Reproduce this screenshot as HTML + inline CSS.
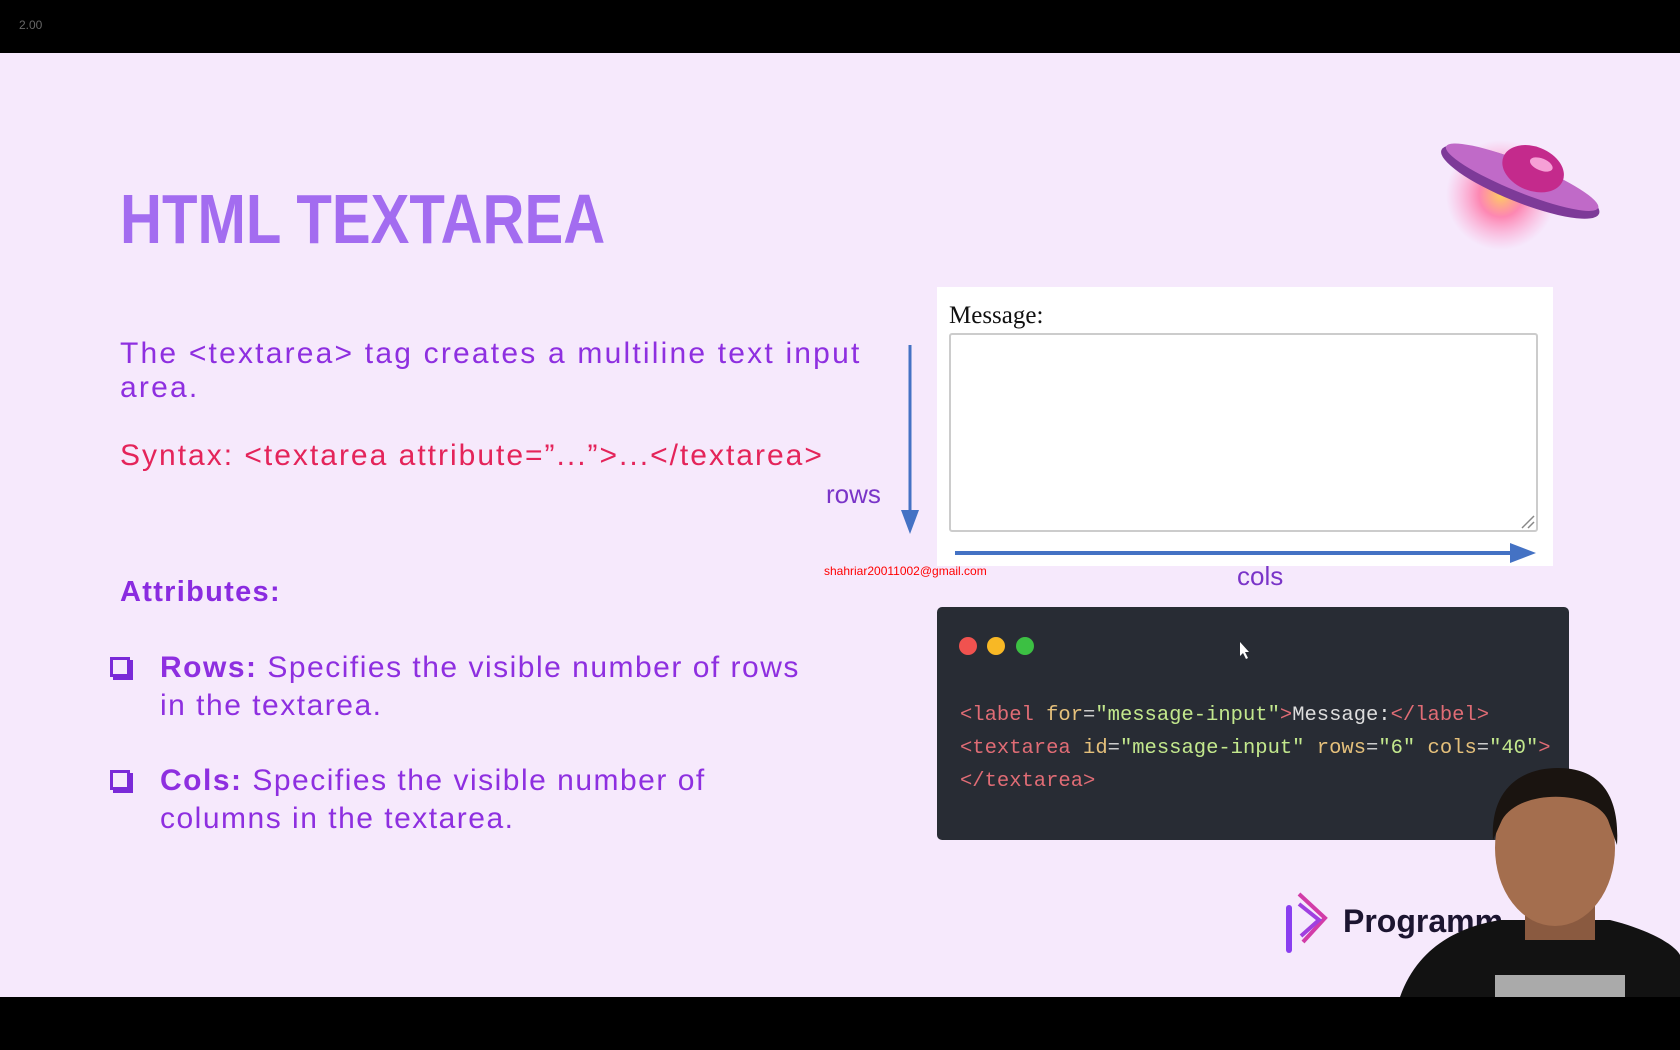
<!DOCTYPE html>
<html><head><meta charset="utf-8">
<style>
*{margin:0;padding:0;box-sizing:border-box}
body{width:1680px;height:1050px;overflow:hidden;background:#f6e9fc;font-family:"Liberation Sans",sans-serif;position:relative}
.a{position:absolute;white-space:nowrap}
.top{left:0;top:0;width:1680px;height:53px;background:#000}
.bot{left:0;top:997px;width:1680px;height:53px;background:#000}
.t{font-size:30px;color:#8e2fe0;line-height:34px}
.mono{font-family:"Liberation Mono",monospace;font-size:20.5px;line-height:33px;color:#e06c75}
.cb{width:20px;height:20px;border:3px solid #7a2ad8;box-shadow:3px 3px 0 #7a2ad8}
</style></head><body>
<div class="a top"></div>
<div class="a" style="left:19px;top:18px;font-size:12px;color:#666">2.00</div>

<div class="a" style="left:120px;top:182px;font-size:70px;font-weight:bold;color:#a36cf0;transform:scaleX(0.83);transform-origin:left top;line-height:74px">HTML TEXTAREA</div>

<div class="a t" style="left:120px;top:337px;letter-spacing:2.2px">The &lt;textarea&gt; tag creates a multiline text input</div>
<div class="a t" style="left:120px;top:371px;letter-spacing:2.2px">area.</div>
<div class="a t" style="left:120px;top:439px;color:#e4245a;letter-spacing:2px">Syntax: &lt;textarea attribute=”...”&gt;...&lt;/textarea&gt;</div>
<div class="a" style="left:826px;top:479px;font-size:26px;color:#7a34c8">rows</div>

<svg class="a" style="left:0;top:0" width="1680" height="1050">
<line x1="910" y1="345" x2="910" y2="512" stroke="#4472c4" stroke-width="3"/>
<polygon points="901,510 919,510 910,534" fill="#4472c4"/>
</svg>

<div class="a" style="left:937px;top:287px;width:616px;height:279px;background:#fff"></div>
<div class="a" style="left:949px;top:302px;font-family:'Liberation Serif',serif;font-size:25px;color:#111">Message:</div>
<div class="a" style="left:949px;top:333px;width:589px;height:199px;border:2px solid #ccc;border-radius:3px;background:#fff"></div>
<svg class="a" style="left:0;top:0" width="1680" height="1050">
<line x1="1522" y1="528" x2="1534" y2="516" stroke="#888" stroke-width="1.5"/>
<line x1="1528" y1="528" x2="1534" y2="522" stroke="#888" stroke-width="1.5"/>
<line x1="955" y1="553" x2="1514" y2="553" stroke="#4472c4" stroke-width="4"/>
<polygon points="1510,543 1536,553 1510,563" fill="#4472c4"/>
</svg>
<div class="a" style="left:1237px;top:561px;font-size:26px;color:#7a34c8">cols</div>
<div class="a" style="left:824px;top:564px;font-size:12px;color:#f00">shahriar20011002@gmail.com</div>

<div class="a" style="left:120px;top:576px;font-size:29px;font-weight:bold;color:#8a2be0;letter-spacing:1.3px">Attributes:</div>
<div class="a cb" style="left:110px;top:657px"></div>
<div class="a t" style="left:160px;top:651px;letter-spacing:1.5px"><b>Rows:</b> Specifies the visible number of rows</div>
<div class="a t" style="left:160px;top:689px;letter-spacing:1.5px">in the textarea.</div>
<div class="a cb" style="left:110px;top:770px"></div>
<div class="a t" style="left:160px;top:764px;letter-spacing:1.5px"><b>Cols:</b> Specifies the visible number of</div>
<div class="a t" style="left:160px;top:802px;letter-spacing:1.5px">columns in the textarea.</div>

<div class="a" style="left:937px;top:607px;width:632px;height:233px;background:#282c34;border-radius:5px"></div>
<svg class="a" style="left:0;top:0" width="1680" height="1050">
<circle cx="968" cy="646" r="9" fill="#f0524f"/>
<circle cx="996" cy="646" r="9" fill="#f8b825"/>
<circle cx="1025" cy="646" r="9" fill="#3cc043"/>
<path d="M1240 642 l0 14 l3 -3 l3 6 l2 -1 l-3 -6 l4 0z" fill="#fff"/>
</svg>
<div class="a mono" style="left:960px;top:699px">&lt;label <span style="color:#e5c07b">for</span><span style="color:#ccc">=</span><span style="color:#c3e88d">"message-input"</span>&gt;<span style="color:#ddd">Message:</span>&lt;/label&gt;</div>
<div class="a mono" style="left:960px;top:732px">&lt;textarea <span style="color:#e5c07b">id</span><span style="color:#ccc">=</span><span style="color:#c3e88d">"message-input"</span> <span style="color:#e5c07b">rows</span><span style="color:#ccc">=</span><span style="color:#c3e88d">"6"</span> <span style="color:#e5c07b">cols</span><span style="color:#ccc">=</span><span style="color:#c3e88d">"40"</span>&gt;</div>
<div class="a mono" style="left:960px;top:765px">&lt;/textarea&gt;</div>

<svg class="a" style="left:1285px;top:890px" width="50" height="70">
<path d="M4 18 L4 60" stroke="#8a3ef0" stroke-width="6" stroke-linecap="round"/>
<path d="M14 4 L40 28 L18 52" fill="none" stroke="#d23ca8" stroke-width="4"/>
<path d="M14 14 L34 30 L16 46" fill="none" stroke="#a040e0" stroke-width="4"/>
</svg>
<div class="a" style="left:1343px;top:903px;font-size:32px;font-weight:bold;color:#1c1530">Programm</div>

<svg class="a" style="left:1436px;top:120px" width="170" height="140">
<defs><radialGradient id="g" cx="50%" cy="50%" r="50%"><stop offset="0" stop-color="#ffcf60"/><stop offset="0.4" stop-color="#ff6fa0" stop-opacity="0.8"/><stop offset="1" stop-color="#ff8fc8" stop-opacity="0"/></radialGradient></defs>
<ellipse cx="65" cy="75" rx="55" ry="55" fill="url(#g)"/>
<g transform="rotate(22 85 60)">
<ellipse cx="85" cy="62" rx="85" ry="20" fill="#7d3a98"/>
<ellipse cx="85" cy="57" rx="82" ry="15" fill="#c06ac8"/>
<ellipse cx="92" cy="45" rx="32" ry="22" fill="#c42a8c"/>
<ellipse cx="98" cy="38" rx="12" ry="6" fill="#f6a0d6"/>
</g>
</svg>

<svg class="a" style="left:1380px;top:760px" width="300" height="237">
<path d="M20 237 C40 180 90 165 120 160 L230 160 C270 170 295 185 300 195 L300 237Z" fill="#121212"/>
<rect x="145" y="130" width="70" height="50" fill="#8a5a40"/>
<ellipse cx="175" cy="88" rx="60" ry="78" fill="#a46e4e"/>
<path d="M113 80 C110 30 140 8 178 8 C220 8 240 35 237 85 L228 60 C215 30 140 28 122 60Z" fill="#1a1410"/>
<rect x="115" y="215" width="130" height="22" fill="#aaa"/>
</svg>

<div class="a bot"></div>
</body></html>
